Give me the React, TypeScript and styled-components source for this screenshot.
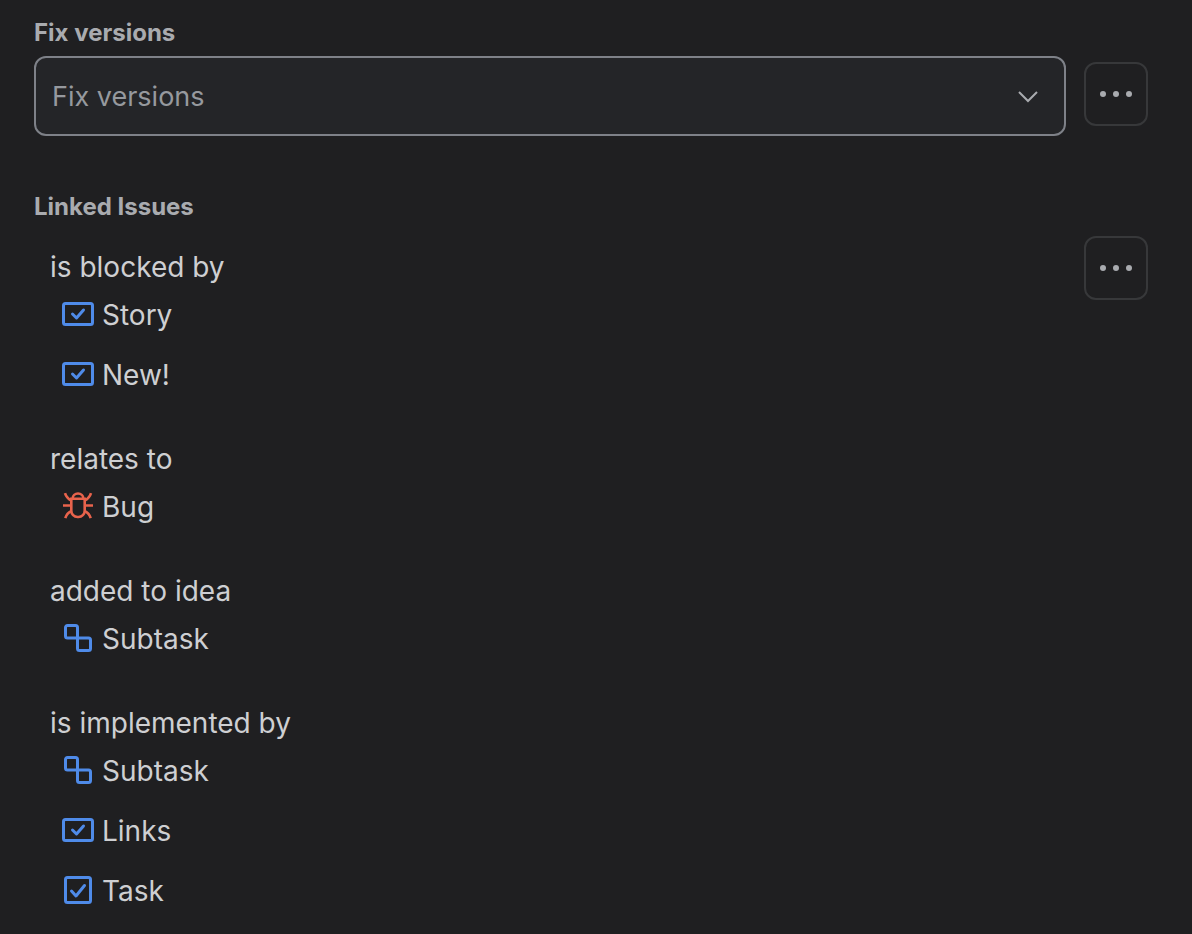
import React from "react";
import styled, { createGlobalStyle } from "styled-components";

const GlobalStyle = createGlobalStyle`
  *, *::before, *::after { box-sizing: border-box; }
  body {
    margin: 0;
    background: #1f1f21;
    color: #cecfd2;
    font-family: Inter, "Liberation Sans", sans-serif;
    font-size: 28px;
    line-height: 36px;
  }
`;

const Panel = styled.main`
  display: flex;
  flex-direction: column;
  gap: 55px;
  padding: 17px 44px 12px 34px;
`;

const Field = styled.section`
  display: flex;
  flex-direction: column;
  gap: 7px;
`;

const fieldLabel = `
  display: block;
  margin: 0;
  font-size: 24px;
  line-height: 32px;
  font-weight: 700;
  color: #a9abaf;
`;

const Label = styled.label`
  ${fieldLabel}
`;

const Heading = styled.h2`
  ${fieldLabel}
`;

const FieldBody = styled.div`
  display: flex;
  align-items: flex-start;
  gap: 18px;
`;

const SelectBox = styled.div`
  position: relative;
  flex: 1;
  min-width: 0;
`;

const Select = styled.select`
  appearance: none;
  display: block;
  width: 100%;
  height: 80px;
  padding: 2px 64px 0 16px;
  border: 2px solid #7e8188;
  border-radius: 12px;
  background: #242528;
  color: #96999e;
  font: inherit;
  font-size: 27px;
`;

const Chevron = styled.svg`
  position: absolute;
  top: 50%;
  right: 26px;
  width: 24px;
  height: 24px;
  margin-top: -12px;
  pointer-events: none;
`;

const MoreButton = styled.button`
  display: flex;
  flex: none;
  align-items: center;
  justify-content: center;
  width: 64px;
  height: 64px;
  margin-top: 6px;
  padding: 0;
  border: 2px solid #37383a;
  border-radius: 12px;
  background: transparent;
  color: #a9abaf;
  cursor: pointer;
`;

const Groups = styled.div`
  display: flex;
  flex: 1;
  flex-direction: column;
  gap: 36px;
  min-width: 0;
  padding: 19px 0 0 16px;
`;

const GroupTitle = styled.h3`
  margin: 0;
  font-size: 28px;
  line-height: 36px;
  font-weight: 400;
`;

const IssueList = styled.ul`
  margin: 0;
  padding: 0 0 0 12px;
  list-style: none;
`;

const IssueItem = styled.li`
  display: flex;
  align-items: center;
  height: 60px;
`;

const IssueLink = styled.a`
  display: flex;
  align-items: center;
  gap: 8px;
  color: inherit;
  text-decoration: none;
`;

const IssueIcon = styled.svg<{ $color: string }>`
  flex: none;
  width: 32px;
  height: 32px;
  margin-bottom: 2px;
  color: ${(p) => p.$color};
  fill: none;
  stroke: currentColor;
  stroke-width: 3;
`;

type Kind = "story" | "bug" | "subtask" | "task";

const blue = "#4f8be9";
const red = "#e8634c";

const drawings: Record<Kind, React.ReactNode> = {
  story: (
    <>
      <rect x="1.5" y="5.5" width="29" height="21" rx="2" />
      <path d="M10.5 16l4 4L21.5 12" strokeLinecap="round" strokeLinejoin="round" />
    </>
  ),
  bug: (
    <g strokeWidth="2.6">
      <path d="M9.300 8.800h13.400v12a6.200 6.200 0 0 1-6.200 6.200h-1a6.200 6.200 0 0 1-6.200-6.200z" />
      <path d="M10.700 9V8.500a5.300 5 0 0 1 10.600 0V9" />
      <path d="M1 15.500h8.300M22.700 15.500H31" />
      <path d="M3 3.200C4 6.500 5.800 8.800 9.300 10.600M29 3.200C28 6.500 26.200 8.800 22.700 10.600M3.300 28.200C4.200 24.800 6.200 22.400 9.500 20.800M28.700 28.200C27.800 24.800 25.800 22.400 22.500 20.800" />
    </g>
  ),
  subtask: (
    <>
      <path d="M5.5 3.5h8a2 2 0 0 1 2 2V16H5.500a2 2 0 0 1-2-2V5.500a2 2 0 0 1 2-2z" />
      <path d="M15.5 16H26.500a2 2 0 0 1 2 2v8.500a2 2 0 0 1-2 2h-9a2 2 0 0 1-2-2z" />
    </>
  ),
  task: (
    <>
      <rect x="3.5" y="3.5" width="25" height="25" rx="2" />
      <path d="M9.500 17l4.500 5L22.500 11.500" strokeLinecap="round" strokeLinejoin="round" />
    </>
  ),
};

const groups: { title: string; issues: { kind: Kind; name: string }[] }[] = [
  {
    title: "is blocked by",
    issues: [
      { kind: "story", name: "Story" },
      { kind: "story", name: "New!" },
    ],
  },
  { title: "relates to", issues: [{ kind: "bug", name: "Bug" }] },
  { title: "added to idea", issues: [{ kind: "subtask", name: "Subtask" }] },
  {
    title: "is implemented by",
    issues: [
      { kind: "subtask", name: "Subtask" },
      { kind: "story", name: "Links" },
      { kind: "task", name: "Task" },
    ],
  },
];

function More({ label }: { label: string }) {
  return (
    <MoreButton type="button" aria-label={label}>
      <svg width="32" height="32" viewBox="0 0 32 32" fill="currentColor" aria-hidden="true">
        <circle cx="3" cy="16" r="3" />
        <circle cx="16" cy="16" r="3" />
        <circle cx="29" cy="16" r="3" />
      </svg>
    </MoreButton>
  );
}

export default function App() {
  return (
    <>
      <GlobalStyle />
      <Panel>
        <Field>
          <Label htmlFor="fix-versions">Fix versions</Label>
          <FieldBody>
            <SelectBox>
              <Select id="fix-versions" defaultValue="">
                <option value="">Fix versions</option>
              </Select>
              <Chevron viewBox="0 0 24 24" fill="none" stroke="#a9abaf" strokeWidth="2" aria-hidden="true">
                <path d="M3 8l9 9 9-9" />
              </Chevron>
            </SelectBox>
            <More label="Fix versions options" />
          </FieldBody>
        </Field>
        <Field>
          <Heading>Linked Issues</Heading>
          <FieldBody>
            <Groups>
              {groups.map((group) => (
                <section key={group.title}>
                  <GroupTitle>{group.title}</GroupTitle>
                  <IssueList>
                    {group.issues.map((issue) => (
                      <IssueItem key={issue.name}>
                        <IssueLink href="#">
                          <IssueIcon
                            viewBox="0 0 32 32"
                            $color={issue.kind === "bug" ? red : blue}
                            aria-hidden="true"
                          >
                            {drawings[issue.kind]}
                          </IssueIcon>
                          {issue.name}
                        </IssueLink>
                      </IssueItem>
                    ))}
                  </IssueList>
                </section>
              ))}
            </Groups>
            <More label="Linked issues options" />
          </FieldBody>
        </Field>
      </Panel>
    </>
  );
}
